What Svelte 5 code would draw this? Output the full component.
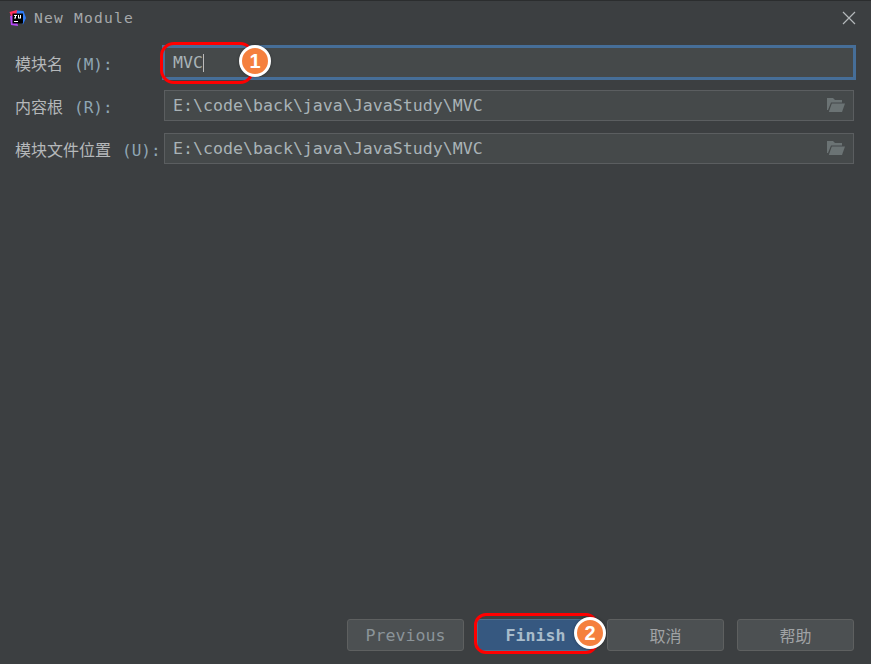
<script>
    const fields = [
        { label: "模块名", key: "(M):", value: "MVC", active: true },
        { label: "内容根", key: "(R):", value: "E:\\code\\back\\java\\JavaStudy\\MVC" },
        { label: "模块文件位置", key: "(U):", value: "E:\\code\\back\\java\\JavaStudy\\MVC" }
    ];
</script>

<div class="dialog">
    <header class="titlebar">
        <svg class="logo" width="18" height="18" viewBox="0 0 18 18">
            <path d="M0.500 3 L8 1 L10 6 L3 10 Z" fill="#fe315d"/>
            <path d="M1 7 L2 16 L9 17 L7 6 Z" fill="#b74af7"/>
            <path d="M8 1.500 L14.500 2 L17 9 L14 15.500 L7 8 Z" fill="#2f7cf6"/>
            <rect x="3.500" y="4.500" width="10.500" height="10" fill="#000"/>
            <path d="M5 6h3v1h-1v2.500h-2v-1h1v-1.500h-1zM9 6h1v2.500h1v-2.500h1v3.500h-3z" fill="#fff"/>
            <rect x="5" y="12" width="4" height="1" fill="#fff"/>
        </svg>
        <span class="title">New Module</span>
        <svg class="close" width="14" height="14" viewBox="0 0 14 14">
            <path d="M1 1 L13 13 M13 1 L1 13" stroke="#b4b8ba" stroke-width="1.2" fill="none"/>
        </svg>
    </header>

    <div class="form">
        {#each fields as f}
            <div class="row">
                <span class="label">{f.label}<span class="key">{f.key}</span></span>
                {#if f.active}
                    <div class="input focused"><span>{f.value}</span><i class="caret"></i></div>
                {:else}
                    <div class="input">
                        <span>{f.value}</span>
                        <svg class="folder" width="19" height="15" viewBox="0 0 19 15">
                            <path d="M1 0h6l2 2h7v2.500H5L2 12H1z" fill="#6b7374"/>
                            <path d="M5.800 5.500H19l-3 8.500H2.800z" fill="#6b7374"/>
                        </svg>
                    </div>
                {/if}
            </div>
        {/each}
    </div>

    <footer class="buttons">
        <button type="button">Previous</button>
        <button type="button" class="primary">Finish</button>
        <button type="button" class="cjk">取消</button>
        <button type="button" class="cjk">帮助</button>
    </footer>

    <div class="mark box1"></div>
    <div class="mark box2"></div>
    <div class="badge badge1">1</div>
    <div class="badge badge2">2</div>
</div>

<style>
    :global(body) {
        margin: 0;
        background: #3c3f41;
    }

    .dialog {
        position: relative;
        width: 871px;
        height: 664px;
        box-sizing: border-box;
        display: flex;
        flex-direction: column;
        background: #3c3f41;
        border-top: 1px solid #2b2d2e;
        font-family: "DejaVu Sans Mono", "Noto Sans CJK SC", monospace;
        overflow: hidden;
    }

    .titlebar {
        display: flex;
        align-items: center;
        height: 33px;
        padding: 0 15px 0 9px;
        gap: 7px;
    }

    .title {
        flex: 1;
        font-size: 14.6px;
        color: #a6a9ab;
        letter-spacing: 1.2px;
    }

    .form {
        flex: 1;
        display: flex;
        flex-direction: column;
        gap: 12px;
        padding: 13px 17px 0 15px;
    }

    .row {
        display: flex;
        align-items: center;
        height: 31px;
    }

    .label {
        width: 149px;
        padding-top: 1px;
        white-space: nowrap;
        font-family: "Noto Sans CJK SC", sans-serif;
        font-size: 16px;
        color: #b5b8ba;
    }

    .key {
        margin-left: 11px;
        font-family: "DejaVu Sans Mono", monospace;
        font-size: 16px;
        color: #8fa6b4;
    }

    .input {
        flex: 1;
        height: 31px;
        box-sizing: border-box;
        display: flex;
        align-items: center;
        padding: 0 8px;
        background: #45494a;
        border: 1px solid #5b5e60;
        font-size: 16.6px;
        color: #a9b3b7;
        white-space: pre;
    }

    .input span {
        flex: none;
    }

    .focused {
        outline: 2px solid #466e98;
        border-color: #466e98;
    }

    .caret {
        width: 1px;
        height: 18px;
        background: #bbbbbb;
    }

    .folder {
        margin-left: auto;
    }

    .buttons {
        display: flex;
        justify-content: flex-end;
        gap: 13px;
        padding: 0 17px 13px 0;
    }

    button {
        width: 117px;
        height: 32px;
        padding: 0;
        box-sizing: border-box;
        background: #4c5052;
        border: 1px solid #5e6060;
        border-radius: 3px;
        font-family: inherit;
        font-size: 16.6px;
        color: #8b9499;
    }

    .primary {
        background: #365880;
        border-color: #4c708c;
        color: #a8bccb;
        font-weight: 600;
    }

    .cjk {
        font-family: "Noto Sans CJK SC", sans-serif;
        font-size: 16px;
        color: #a0a3a5;
    }

    .mark {
        position: absolute;
        box-sizing: border-box;
        border: 3.500px solid #ff0000;
    }

    .box1 {
        left: 160px;
        top: 41px;
        width: 94px;
        height: 42px;
        border-radius: 14px;
    }

    .box2 {
        left: 474px;
        top: 612px;
        width: 124px;
        height: 41px;
        border-radius: 12px;
    }

    .badge {
        position: absolute;
        width: 26px;
        height: 26px;
        display: flex;
        align-items: center;
        justify-content: center;
        background: #f5803e;
        border: 3px solid #ffffff;
        border-radius: 50%;
        font-family: "Liberation Sans", sans-serif;
        font-weight: 700;
        font-size: 20px;
        color: #ffffff;
        box-shadow: 0 0 3px rgba(0, 0, 0, 0.35);
    }

    .badge1 {
        left: 239px;
        top: 44px;
    }

    .badge2 {
        left: 574px;
        top: 616px;
    }
</style>
